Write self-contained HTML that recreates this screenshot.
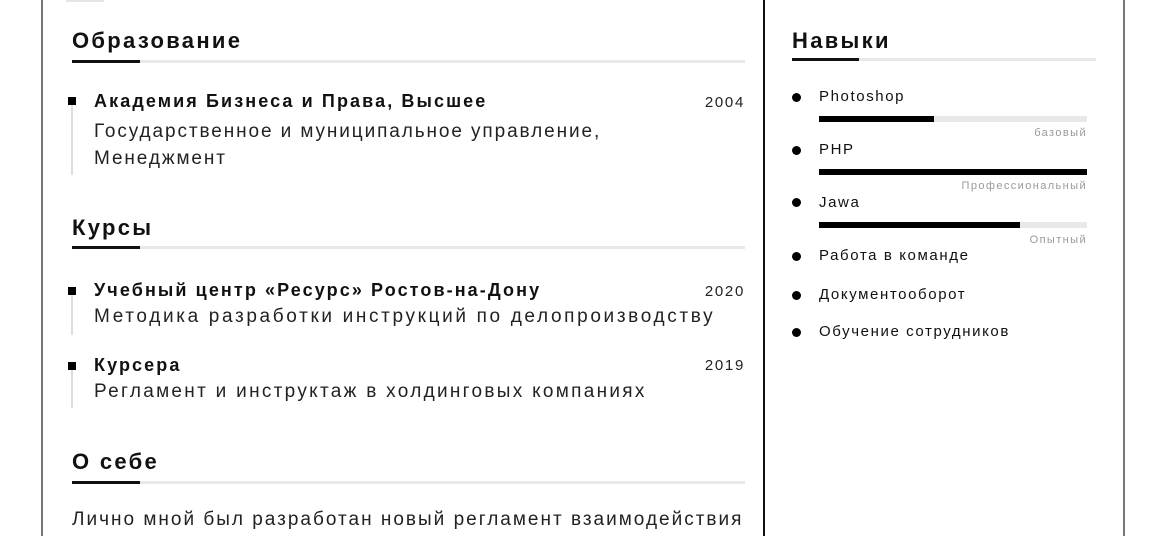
<!DOCTYPE html><html><head><meta charset="utf-8"><style>
body{margin:0;width:1165px;height:536px;background:#fff;position:relative;overflow:hidden;font-family:"Liberation Sans","DejaVu Sans",sans-serif;color:#111}
.a{position:absolute;white-space:nowrap}
.h{font-size:22px;font-weight:bold;color:#111;letter-spacing:2.3px}
.t{font-size:18px;font-weight:bold;letter-spacing:2.1px}
.d{font-size:19px;color:#222;letter-spacing:2.5px}
.y{font-size:15px;color:#222;text-align:right;letter-spacing:1.7px}
.sq{position:absolute;width:8px;height:8px;background:#000}
.vl{position:absolute;width:2px;background:#ddd}
.dot{position:absolute;width:9px;height:9px;border-radius:50%;background:#000}
.s{font-size:15px;color:#111;letter-spacing:1.6px}
.l{font-size:11px;color:#999;text-align:right;letter-spacing:1.4px}
</style></head><body>
<div class="a" style="left:41px;top:0;width:2px;height:536px;background:#777"></div>
<div class="a" style="left:763px;top:0;width:2px;height:536px;background:#111"></div>
<div class="a" style="left:1123px;top:0;width:2px;height:536px;background:#777"></div>
<div class="a" style="left:66px;top:0;width:38px;height:2px;background:#e5e5e5"></div>

<div class="a h" style="left:72px;top:28px">Образование</div>
<div class="a" style="left:72px;top:60px;width:673px;height:3px;background:#e8e8e8"></div>
<div class="a" style="left:72px;top:60px;width:68px;height:3px;background:#111"></div>
<div class="sq" style="left:68px;top:97px"></div><div class="vl" style="left:71px;top:105px;height:70px"></div>
<div class="a t" style="left:94px;top:91px">Академия Бизнеса и Права, Высшее</div>
<div class="a y" style="left:645px;top:94px;width:100px">2004</div>
<div class="a d" style="left:94px;top:118px;line-height:27px;letter-spacing:1.9px">Государственное и муниципальное управление,<br>Менеджмент</div>

<div class="a h" style="left:72px;top:215px">Курсы</div>
<div class="a" style="left:72px;top:246px;width:673px;height:3px;background:#e8e8e8"></div>
<div class="a" style="left:72px;top:246px;width:68px;height:3px;background:#111"></div>
<div class="sq" style="left:68px;top:287px"></div><div class="vl" style="left:71px;top:295px;height:40px"></div>
<div class="a t" style="left:94px;top:280px">Учебный центр «Ресурс» Ростов-на-Дону</div>
<div class="a y" style="left:645px;top:283px;width:100px">2020</div>
<div class="a d" style="left:94px;top:306px;letter-spacing:2.65px">Методика разработки инструкций по делопроизводству</div>
<div class="sq" style="left:68px;top:362px"></div><div class="vl" style="left:71px;top:370px;height:38px"></div>
<div class="a t" style="left:94px;top:355px">Курсера</div>
<div class="a y" style="left:645px;top:357px;width:100px">2019</div>
<div class="a d" style="left:94px;top:381px;letter-spacing:2.3px">Регламент и инструктаж в холдинговых компаниях</div>

<div class="a h" style="left:72px;top:449px">О себе</div>
<div class="a" style="left:72px;top:481px;width:673px;height:3px;background:#e8e8e8"></div>
<div class="a" style="left:72px;top:481px;width:68px;height:3px;background:#111"></div>
<div class="a d" style="left:72px;top:509px;letter-spacing:2.0px">Лично мной был разработан новый регламент взаимодействия</div>

<div class="a h" style="left:792px;top:28px">Навыки</div>
<div class="a" style="left:792px;top:58px;width:304px;height:3px;background:#e8e8e8"></div>
<div class="a" style="left:792px;top:58px;width:67px;height:3px;background:#111"></div>

<div class="dot" style="left:792px;top:93px"></div><div class="a s" style="left:819px;top:88px">Photoshop</div>
<div class="a" style="left:819px;top:116px;width:268px;height:6px;background:#e8e8e8"></div><div class="a" style="left:819px;top:116px;width:115px;height:6px;background:#000"></div>
<div class="a l" style="left:887px;top:127px;width:200px">базовый</div>
<div class="dot" style="left:792px;top:146px"></div><div class="a s" style="left:819px;top:141px">PHP</div>
<div class="a" style="left:819px;top:169px;width:268px;height:6px;background:#000"></div>
<div class="a l" style="left:887px;top:180px;width:200px">Профессиональный</div>
<div class="dot" style="left:792px;top:198px"></div><div class="a s" style="left:819px;top:194px">Jawa</div>
<div class="a" style="left:819px;top:222px;width:268px;height:6px;background:#e8e8e8"></div><div class="a" style="left:819px;top:222px;width:201px;height:6px;background:#000"></div>
<div class="a l" style="left:887px;top:234px;width:200px">Опытный</div>
<div class="dot" style="left:792px;top:252px"></div><div class="a s" style="left:819px;top:247px">Работа в команде</div>
<div class="dot" style="left:792px;top:291px"></div><div class="a s" style="left:819px;top:286px">Документооборот</div>
<div class="dot" style="left:792px;top:328px"></div><div class="a s" style="left:819px;top:323px">Обучение сотрудников</div>
</body></html>
